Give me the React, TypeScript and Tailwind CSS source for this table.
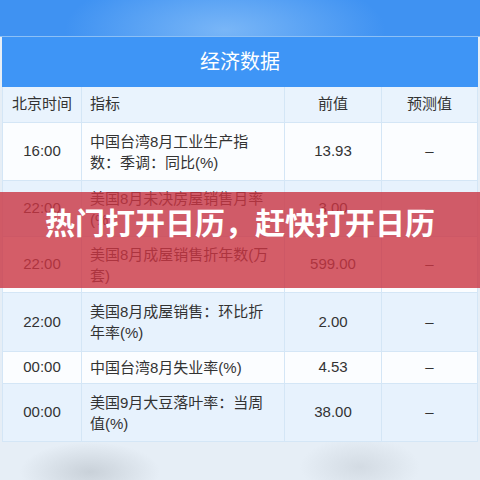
const font = "font-['Liberation_Sans','Noto_Sans_CJK_SC',sans-serif]";

const rows = [
  { time: "16:00", lines: ["中国台湾8月工业生产指", "数：季调：同比(%)"], prev: "13.93", h: "h-[58px]", bg: "bg-[#fbfdff]" },
  { time: "22:00", lines: ["美国8月未决房屋销售月率", "(%)"], prev: "3.00", h: "h-[56px]", bg: "bg-[#e7f2fd]" },
  { time: "22:00", lines: ["美国8月成屋销售折年数(万", "套)"], prev: "599.00", h: "h-[56px]", bg: "bg-[#fbfdff]" },
  { time: "22:00", lines: ["美国8月成屋销售：环比折", "年率(%)"], prev: "2.00", h: "h-[59px]", bg: "bg-[#e7f2fd]" },
  { time: "00:00", lines: ["中国台湾8月失业率(%)"], prev: "4.53", h: "h-[32px]", bg: "bg-[#fbfdff]" },
  { time: "00:00", lines: ["美国9月大豆落叶率：当周", "值(%)"], prev: "38.00", h: "h-[58px]", bg: "bg-[#e7f2fd]" },
];

const cell = "flex items-center border-r border-b border-[#d4e6f6]";

export default function App() {
  return (
    <div className={`relative w-[480px] h-[480px] overflow-hidden bg-[#e6eef6] ${font}`}>
      {/* blurred top strip */}
      <div className="h-[37px] border-b border-[#8cc0f6] bg-[radial-gradient(ellipse_160px_60px_at_225px_30px,#79b6f7,#3f92f2)]" />

      <div className="mx-[2px]">
        <div className="h-[50px] flex items-center justify-center bg-[#3e95f6] text-white text-[20px]">
          经济数据
        </div>

        <div className="grid grid-cols-[80px_203px_97px_96px] text-[15px] text-[#333]">
          <div className={`${cell} h-[36px] justify-center bg-[#e9f3fd] border-l`}>北京时间</div>
          <div className={`${cell} h-[36px] pl-2 bg-[#e9f3fd]`}>指标</div>
          <div className={`${cell} h-[36px] justify-center bg-[#e9f3fd]`}>前值</div>
          <div className={`${cell} h-[36px] justify-center bg-[#e9f3fd]`}>预测值</div>

          {rows.map((r, i) => (
            <div key={i} className="contents">
              <div className={`${cell} ${r.h} ${r.bg} justify-center border-l`}>{r.time}</div>
              <div className={`${cell} ${r.h} ${r.bg} pl-2`}>
                <div className="leading-[21px] whitespace-nowrap">
                  {r.lines.map((l, j) => (
                    <div key={j}>{l}</div>
                  ))}
                </div>
              </div>
              <div className={`${cell} ${r.h} ${r.bg} justify-center`}>{r.prev}</div>
              <div className={`${cell} ${r.h} ${r.bg} justify-center`}>–</div>
            </div>
          ))}
        </div>
      </div>

      {/* blurred bottom */}
      <div className="h-[38px] bg-[radial-gradient(ellipse_70px_30px_at_90px_30px,#c9d1d9,transparent),radial-gradient(ellipse_60px_30px_at_360px_25px,#d3dbe3,transparent)]" />

      {/* red banner over content */}
      <div className="absolute left-0 right-0 top-[192px] h-[96px] bg-[#cb3442]/80 flex justify-center pt-[14px]">
        <div className="text-white text-[30px] leading-[30px] font-bold font-['Noto_Sans_CJK_SC',sans-serif]">
          热门打开日历，赶快打开日历
        </div>
      </div>
    </div>
  );
}
